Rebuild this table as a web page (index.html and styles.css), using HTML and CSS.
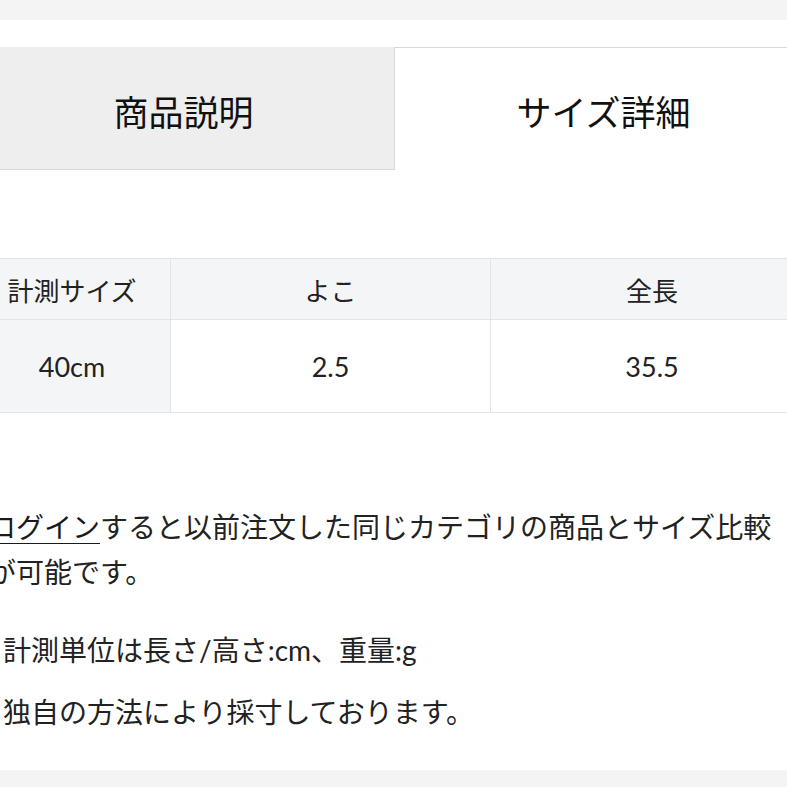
FILE: index.html
```html
<!DOCTYPE html>
<html lang="ja">
<head>
<meta charset="utf-8">
<title>サイズ詳細</title>
<link rel="stylesheet" href="styles.css">
</head>
<body>
<div class="band"></div>
<main class="wrap">
  <div class="tabs">
    <div class="tab tab-off">商品説明</div>
    <div class="tab tab-on">サイズ詳細</div>
  </div>
  <table class="size">
    <colgroup>
      <col class="col-1">
      <col class="col-2">
      <col class="col-3">
    </colgroup>
    <thead>
      <tr><th class="side">計測サイズ</th><th>よこ</th><th>全長</th></tr>
    </thead>
    <tbody>
      <tr><th class="side num">40cm</th><td class="num">2.5</td><td class="num">35.5</td></tr>
    </tbody>
  </table>
  <div class="notes">
    <p class="note note-login"><a class="login" href="#">ログイン</a>すると以前注文した同じカテゴリの商品とサイズ比較が可能です。</p>
    <p class="note note-unit">※計測単位は長さ/高さ:cm、重量:g</p>
    <p class="note note-method">※独自の方法により採寸しております。</p>
  </div>
</main>
<div class="band band-bottom"></div>
</body>
</html>
```
FILE: styles.css
```css
html, body {
  margin: 0;
  padding: 0;
  background: #ffffff;
  overflow: hidden;
}
body {
  font-family: Lato, "Noto Sans CJK JP", sans-serif;
  color: #222222;
}
.band {
  height: 20px;
  background: #f4f4f4;
}
.band-bottom {
  height: 30px;
  margin-top: 35px;
}
.wrap {
  margin-left: -27px;
  width: 840px;
}
.tabs {
  display: flex;
  margin-top: 27px;
  height: 123px;
}
.tab {
  display: flex;
  align-items: center;
  justify-content: center;
  font-size: 35px;
  color: #111111;
  box-sizing: border-box;
  padding-top: 4px;
}
.tab-off {
  width: 422px;
  background: #eeeeee;
  border-right: 1px solid #d9d9d9;
  border-bottom: 1px solid #d9d9d9;
}
.tab-on {
  flex: 1;
  background: #ffffff;
  border-top: 1px solid #d9d9d9;
  border-right: 1px solid #d9d9d9;
  height: 122px;
}
.size {
  margin-top: 88px;
  width: 840px;
  border-collapse: collapse;
  table-layout: fixed;
}
.col-1 { width: 197px; }
.col-2 { width: 320px; }
.col-3 { width: 323px; }
.size th, .size td {
  border: 1px solid #e2e5e7;
  text-align: center;
  vertical-align: middle;
  padding: 0;
  font-weight: normal;
  color: #222222;
}
.size thead th {
  background: #f3f5f6;
  height: 60px;
  font-size: 26px;
}
.size tbody th, .size tbody td {
  height: 92px;
  font-size: 27px;
}
.size tbody th.side {
  background: #f3f5f6;
}
.notes {
  margin-top: 92px;
}
.note {
  margin: 0;
  font-size: 28px;
  line-height: 45px;
  color: #222222;
}
.note-login {
  margin-left: 15px;
  width: 792px;
}
.login {
  color: #1a1a1a;
  text-decoration: underline;
  text-underline-offset: 5px;
  text-decoration-thickness: 1px;
}
.note-unit {
  margin-left: 2px;
  margin-top: 33px;
}
.note-method {
  margin-left: 2px;
  margin-top: 17px;
}
```
